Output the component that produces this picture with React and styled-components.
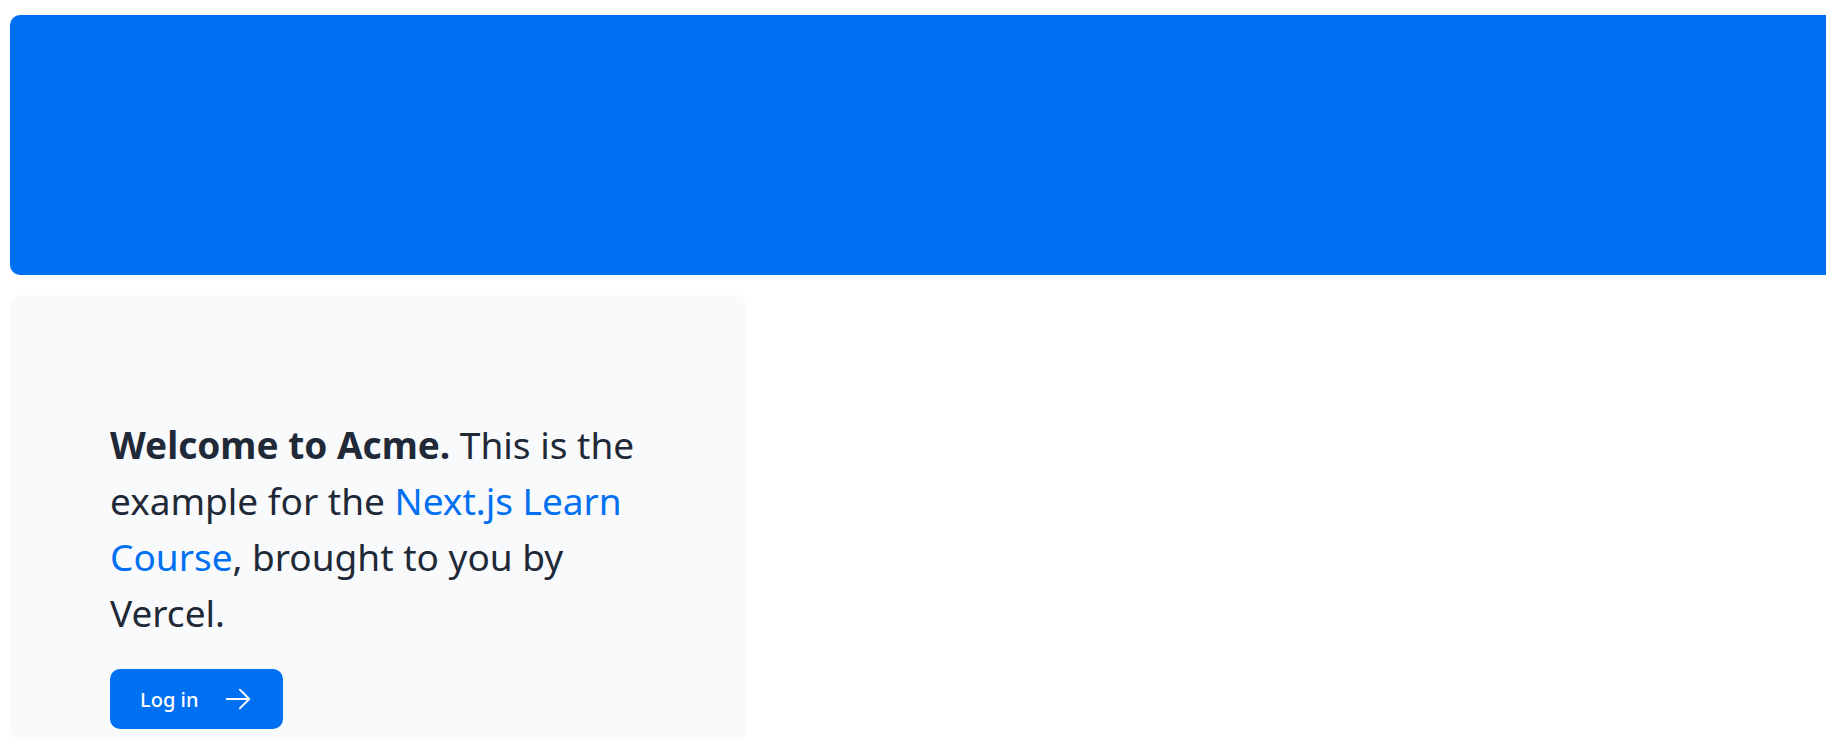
import styled, { createGlobalStyle } from 'styled-components';

const GlobalStyle = createGlobalStyle`
	html, body {
		margin: 0;
		padding: 0;
		background: #ffffff;
	}
	body {
		font-family: 'Noto Sans', 'Open Sans', Arial, sans-serif;
		-webkit-font-smoothing: antialiased;
	}
	* {
		box-sizing: border-box;
	}
`;

const Main = styled.main`
	display: flex;
	flex-direction: column;
	gap: 20px;
	height: 748px;
	padding: 15px 7px 9px 10px;
	overflow: hidden;
`;

const Banner = styled.div`
	display: flex;
	align-items: flex-end;
	flex-shrink: 0;
	height: 260px;
	border-radius: 10px 0 0 10px;
	background: #0070f3;
`;

const Row = styled.div`
	display: flex;
	flex: 1;
	gap: 20px;
	min-height: 0;
`;

const Intro = styled.div`
	display: flex;
	flex-direction: column;
	justify-content: flex-end;
	gap: 28px;
	width: 736px;
	padding: 0 100px 10px;
	border-radius: 10px;
	background: #f9fafb;
`;

const Lead = styled.p`
	margin: 0;
	font-size: 37px;
	line-height: 56px;
	color: #1f2937;
`;

const Link = styled.a`
	color: #0070f3;
	text-decoration: none;
`;

const LoginButton = styled.a`
	display: flex;
	align-items: center;
	gap: 25px;
	align-self: flex-start;
	height: 60px;
	padding: 0 30px;
	border-radius: 10px;
	background: #0070f3;
	color: #ffffff;
	font-size: 20px;
	font-weight: 500;
	text-decoration: none;
`;

const ArrowIcon = () => (
	<svg width="30" height="30" viewBox="0 0 24 24" fill="none" stroke="currentColor" strokeWidth="1.5" strokeLinecap="round" strokeLinejoin="round">
		<path d="M13.5 4.5 21 12m0 0-7.5 7.5M21 12H3" />
	</svg>
);

export default function App() {
	return (
		<>
			<GlobalStyle />
			<Main>
				<Banner />
				<Row>
					<Intro>
						<Lead>
							<strong>Welcome to Acme.</strong> This is the example for the{' '}
							<Link href="#">Next.js Learn Course</Link>, brought to you by Vercel.
						</Lead>
						<LoginButton href="#">
							<span>Log in</span>
							<ArrowIcon />
						</LoginButton>
					</Intro>
				</Row>
			</Main>
		</>
	);
}
